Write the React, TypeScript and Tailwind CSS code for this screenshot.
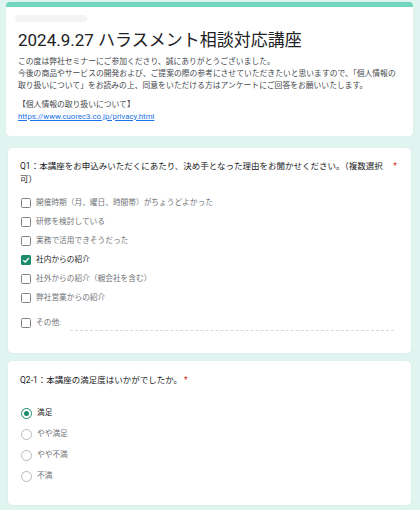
import React from "react";

const font = { fontFamily: 'Roboto, "Noto Sans CJK JP", sans-serif' };

function Checkbox({ checked }: { checked?: boolean }) {
  if (checked) {
    return (
      <span className="w-[10px] h-[10px] rounded-[1.5px] bg-[#1a8c6c] flex items-center justify-center shrink-0">
        <svg width="8" height="8" viewBox="0 0 10 10">
          <path d="M1.5 5.2 L4 7.5 L8.6 2.5" fill="none" stroke="#fff" strokeWidth="1.6" />
        </svg>
      </span>
    );
  }
  return <span className="w-[10px] h-[10px] rounded-[1.5px] border-[1.5px] border-[#808386] shrink-0 box-border" />;
}

function Radio({ checked }: { checked?: boolean }) {
  if (checked) {
    return (
      <span className="w-[11px] h-[11px] rounded-full border-[1.5px] border-[#1a8c6c] flex items-center justify-center shrink-0 box-border">
        <span className="w-[5px] h-[5px] rounded-full bg-[#1a8c6c]" />
      </span>
    );
  }
  return <span className="w-[11px] h-[11px] rounded-full border-[1.2px] border-[#b8babd] shrink-0 box-border" />;
}

export default function App() {
  const opts = [
    { t: "開催時期（月、曜日、時間帯）がちょうどよかった" },
    { t: "研修を検討している" },
    { t: "実務で活用できそうだった" },
    { t: "社内からの紹介", c: true },
    { t: "社外からの紹介（親会社を含む）" },
    { t: "弊社営業からの紹介" },
  ];
  const radios = [
    { t: "満足", c: true },
    { t: "やや満足" },
    { t: "やや不満" },
    { t: "不満" },
  ];
  return (
    <div className="w-[420px] h-[510px] bg-[#e0f5f0] overflow-hidden pt-[2px]" style={font}>
      {/* Header card */}
      <div className="ml-[6px] mr-[7px] bg-white rounded-[4px] shadow-[0_0_1px_rgba(0,0,0,0.15)]">
        <div className="h-[5px] bg-[#72d5bd] rounded-t-[4px]" />
        <div className="px-[12px] pb-[13px]">
          <div className="mt-[8px] ml-[-3px] w-[72px] h-[7px] rounded-full bg-[#f3f5f5]" />
          <div className="mt-[7px] text-[17px] leading-[22px] text-[#202124]">
            2024.9.27 ハラスメント相談対応講座
          </div>
          <div className="mt-[5px] text-[7.8px] leading-[12px] text-[#45494d]">
            <div>この度は弊社セミナーにご参加くださり、誠にありがとうございました。</div>
            <div>
              今後の商品やサービスの開発および、ご提案の際の参考にさせていただきたいと思いますので、「個人情報の取り扱いについて」をお読みの上、同意をいただける方はアンケートにご回答をお願いいたします。
            </div>
            <div className="mt-[7px]">【個人情報の取り扱いについて】</div>
            <div className="text-[#1a73e8] underline">https://www.cuorec3.co.jp/privacy.html</div>
          </div>
        </div>
      </div>

      {/* Q1 card */}
      <div className="mt-[12px] ml-[8px] mr-[9px] bg-white rounded-[4px] shadow-[0_0_1px_rgba(0,0,0,0.18)] pt-[11.5px] pb-[20.5px] px-[12px]">
        <div className="flex text-[8.5px] leading-[13px] text-[#202124]">
          <div className="flex-1 whitespace-nowrap">
            Q1：本講座をお申込みいただくにあたり、決め手となった理由をお聞かせください。（複数選択
            <br />
            可）
          </div>
          <span className="text-[#d93025] ml-[2px] mr-[2px]">*</span>
        </div>
        <div className="mt-[8px] flex flex-col">
          {opts.map((o) => (
            <div key={o.t} className="h-[19px] flex items-center pl-[1px]">
              <Checkbox checked={o.c} />
              <span className={`ml-[5px] text-[7.7px] ${o.c ? "text-[#202124]" : "text-[#6f7377]"}`}>{o.t}</span>
            </div>
          ))}
          <div className="h-[19px] mt-[6px] flex items-center pl-[1px]">
            <Checkbox />
            <span className="ml-[5px] text-[7.7px] text-[#6f7377]">その他:</span>
            <div className="ml-[9px] mr-[5px] flex-1 self-stretch relative">
              <div className="absolute left-0 right-0 top-[16px] border-b border-dashed border-[#d6d8da]" />
            </div>
          </div>
        </div>
      </div>

      {/* Q2 card */}
      <div className="mt-[8px] ml-[8px] mr-[9px] bg-white rounded-[4px] shadow-[0_0_1px_rgba(0,0,0,0.18)] pt-[12.5px] pb-[18px] px-[12px]">
        <div className="text-[8.5px] leading-[13px] text-[#202124]">
          Q2-1：本講座の満足度はいかがでしたか。<span className="text-[#d93025] ml-[2px]">*</span>
        </div>
        <div className="mt-[16px] flex flex-col">
          {radios.map((r) => (
            <div key={r.t} className="h-[21px] flex items-center pl-[1px]">
              <Radio checked={r.c} />
              <span className={`ml-[5px] text-[7.7px] ${r.c ? "text-[#202124]" : "text-[#6f7377]"}`}>{r.t}</span>
            </div>
          ))}
        </div>
      </div>
    </div>
  );
}
